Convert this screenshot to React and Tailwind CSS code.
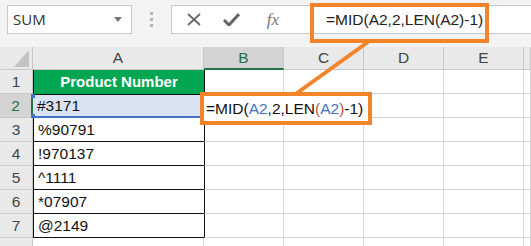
import React from "react";

const ORANGE = "#f4842a";
const cols = ["A", "B", "C", "D", "E", ""];
const values = ["#3171", "%90791", "!970137", "^1111", "*07907", "@2149"];

export default function App() {
  return (
    <div className="relative w-[531px] h-[246px] overflow-hidden bg-white font-['Liberation_Sans',sans-serif] text-[#222]">
      {/* TOOLBAR */}
      <div className="h-[47px] bg-[#f3f3f3] flex items-start pt-[5px] pl-[7px]">
        <div className="w-[125px] h-[29px] bg-white border border-[#c8c8c8] flex items-center justify-between pl-[5px] pr-[9px]">
          <span className="text-[15px] font-['Open_Sans',sans-serif] text-[#333]">SUM</span>
          <svg width="8" height="5" viewBox="0 0 8 5">
            <path d="M0 0 L8 0 L4 5 Z" fill="#777" />
          </svg>
        </div>
        <div className="w-[39px] h-[29px] flex flex-col items-center justify-center gap-[3px]">
          <div className="w-[3px] h-[3px] bg-[#b5b5b5]" />
          <div className="w-[3px] h-[3px] bg-[#b5b5b5]" />
          <div className="w-[3px] h-[3px] bg-[#b5b5b5]" />
        </div>
        <div className="flex-1 h-[29px] bg-white border border-r-0 border-[#c8c8c8] flex items-center">
          <div className="w-[31px] flex justify-center ml-[6px]">
            <svg width="14" height="13" viewBox="0 0 14 13">
              <path d="M1 1 L13 12 M13 1 L1 12" stroke="#666" strokeWidth="1.8" />
            </svg>
          </div>
          <div className="w-[44px] flex justify-center">
            <svg width="17" height="13" viewBox="0 0 17 13">
              <path d="M1 7 L6 12 L16 1" stroke="#666" strokeWidth="3" fill="none" />
            </svg>
          </div>
          <div className="w-[40px] flex justify-center">
            <span className="font-['Liberation_Serif',serif] italic text-[17px] text-[#777]">fx</span>
          </div>
          <span className="ml-[33px] text-[15.5px]">=MID(A2,2,LEN(A2)-1)</span>
        </div>
      </div>

      {/* GRID */}
      <div className="grid grid-cols-[33px_171px_80px_80px_80px_80px_7px] text-[15.5px]">
        {/* header row */}
        <div className="h-[23px] bg-[#e9e9e9] border-r border-b border-[#c8c8c8] flex items-end justify-end pr-[3px] pb-[2px]">
          <svg width="15" height="17" viewBox="0 0 15 17">
            <path d="M15 0 L15 17 L0 17 Z" fill="#c3c3c3" />
          </svg>
        </div>
        {cols.map((c) =>
          c === "B" ? (
            <div key={c} className="h-[23px] bg-[#d4d4d4] border-r border-[#c8c8c8] border-b-2 border-b-[#217346] flex items-center justify-center text-[#217346]">
              {c}
            </div>
          ) : (
            <div key={c + "h"} className="h-[23px] bg-[#e9e9e9] border-r border-b border-[#c8c8c8] flex items-center justify-center text-[#444]">
              {c}
            </div>
          )
        )}

        {/* row 1 */}
        <div className="h-[24px] bg-[#e9e9e9] border-r border-b border-[#c8c8c8] flex items-center justify-center text-[#444]">1</div>
        <div className="h-[24px] bg-[#00a651] border-l border-[#111] flex items-center justify-center text-white font-bold text-[15px]">
          Product Number
        </div>
        {[0, 1, 2, 3, 4].map((i) => (
          <div key={"r1" + i} className={`h-[24px] border-r border-b border-[#d4d4d4] ${i === 0 ? "border-l border-l-[#111]" : ""}`} />
        ))}

        {/* rows 2-7 */}
        {values.map((v, idx) => {
          const row = idx + 2;
          const sel = row === 2;
          return (
            <React.Fragment key={row}>
              <div
                className={`h-[24px] border-b border-[#c8c8c8] flex items-center justify-center ${
                  sel ? "bg-[#d4d4d4] text-[#217346] border-r-2 border-r-[#217346]" : "bg-[#e9e9e9] text-[#444] border-r"
                }`}
              >
                {row}
              </div>
              <div
                className={`relative h-[24px] flex items-center pl-[4px] text-[#111] ${
                  sel ? "bg-[#dae3f3] border-b-2 border-b-[#4472c4] border-t border-t-[#111]" : "border-b border-[#111] border-l border-l-[#111]"
                }`}
              >
                {v}
                {sel && (
                  <>
                    <div className="absolute left-[-2px] top-[-1px] w-[4px] h-[4px] bg-[#4472c4]" />
                    <div className="absolute left-[-2px] bottom-[-2px] w-[4px] h-[4px] bg-[#4472c4]" />
                  </>
                )}
              </div>
              {[0, 1, 2, 3, 4].map((i) => (
                <div key={"c" + i} className={`h-[24px] border-r border-b border-[#d4d4d4] ${i === 0 ? "border-l border-l-[#111]" : ""}`} />
              ))}
            </React.Fragment>
          );
        })}

        {/* row 8 partial */}
        <div className="h-[24px] bg-[#e9e9e9] border-r border-[#c8c8c8]" />
        <div className="h-[24px] border-r border-[#d4d4d4]" />
        {[0, 1, 2, 3, 4].map((i) => (
          <div key={"r8" + i} className="h-[24px] border-r border-[#d4d4d4]" />
        ))}
      </div>

      {/* CALLOUTS */}
      <div className="absolute left-[310px] top-[3px] w-[179px] h-[40px] border-4 border-[#f4842a]" />
      <svg className="absolute left-0 top-0" width="531" height="246">
        <line x1="368" y1="42" x2="297" y2="93" stroke={ORANGE} strokeWidth="4" />
      </svg>
      <div className="absolute left-[200px] top-[92px] w-[172px] h-[33px] border-4 border-[#f4842a] bg-white flex items-center pl-[2px] text-[15.5px] text-[#111]">
        <span>=MID(</span>
        <span className="text-[#4472c4]">A2</span>
        <span>,2,LEN</span>
        <span className="text-[#c0504d]">(</span>
        <span className="text-[#4472c4]">A2</span>
        <span className="text-[#c0504d]">)</span>
        <span>-1)</span>
      </div>
    </div>
  );
}
